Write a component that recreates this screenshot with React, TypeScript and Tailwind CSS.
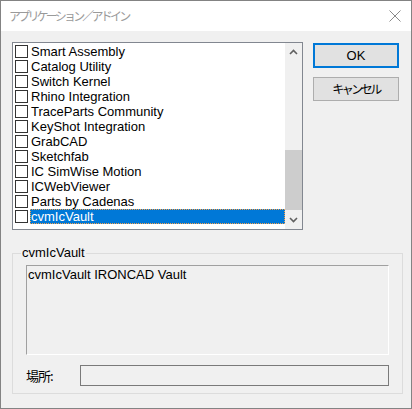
import React from "react";

const items = [
  "Smart Assembly",
  "Catalog Utility",
  "Switch Kernel",
  "Rhino Integration",
  "TraceParts Community",
  "KeyShot Integration",
  "GrabCAD",
  "Sketchfab",
  "IC SimWise Motion",
  "ICWebViewer",
  "Parts by Cadenas",
  "cvmIcVault",
];

const font = { fontFamily: '"Liberation Sans", "Noto Sans CJK JP", sans-serif' };
const jp = { fontFamily: '"Noto Sans CJK JP", sans-serif' };

export default function App() {
  return (
    <div
      className="w-[412px] h-[409px] border border-[#838383] bg-[#f0f0f0] flex flex-col text-[13px] text-black leading-none overflow-hidden"
      style={font}
    >
      {/* title bar */}
      <div className="h-[30px] bg-white flex items-center justify-between pl-[8px] pr-[8px] shrink-0">
        <span className="text-[#9a9a9a] text-[12px] tracking-[-2.8px]" style={jp}>
          アプリケーション／アドイン
        </span>
        <svg width="14" height="14" viewBox="0 0 14 14" className="mr-[1px]">
          <path d="M1.5 1.5 L12.5 12.5 M12.5 1.5 L1.5 12.5" stroke="#8a8a8a" strokeWidth="1" />
        </svg>
      </div>

      {/* body */}
      <div className="flex flex-col pt-[11px] pl-[11px] pr-[9px]">
        <div className="flex">
          {/* list box */}
          <div className="w-[291px] h-[188px] border border-[#828790] bg-white flex">
            <div className="flex-1 flex flex-col pt-[1px]">
              {items.map((it, i) => {
                const sel = i === items.length - 1;
                return (
                  <div key={it} className="h-[15px] flex items-center">
                    <div className="ml-[2px] w-[13px] h-[13px] border border-[#333333] bg-white shrink-0" />
                    <div
                      className={
                        "ml-[2px] h-[15px] flex items-center pl-[1px] " +
                        (sel
                          ? "flex-1 bg-[#0078d7] text-white outline-1 outline-dotted outline-[#f7a14a] -outline-offset-1"
                          : "")
                      }
                    >
                      {it}
                    </div>
                  </div>
                );
              })}
            </div>
            {/* scrollbar */}
            <div className="w-[17px] bg-[#f0f0f0] flex flex-col">
              <div className="h-[17px] flex items-center justify-center">
                <svg width="9" height="6" viewBox="0 0 9 6">
                  <path d="M1 5 L4.5 1.5 L8 5" stroke="#606060" strokeWidth="1.6" fill="none" />
                </svg>
              </div>
              <div className="h-[90px]" />
              <div className="h-[60px] bg-[#cdcdcd]" />
              <div className="flex-1 flex items-center justify-center">
                <svg width="9" height="6" viewBox="0 0 9 6">
                  <path d="M1 1 L4.5 4.5 L8 1" stroke="#606060" strokeWidth="1.6" fill="none" />
                </svg>
              </div>
            </div>
          </div>

          {/* buttons */}
          <div className="flex flex-col ml-[10px] mt-[1px] gap-[9px]">
            <button className="w-[86px] h-[25px] border-2 border-[#0078d7] bg-[#e1e1e1] flex items-center justify-center text-[13px]">
              OK
            </button>
            <button
              className="w-[86px] h-[24px] border border-[#adadad] bg-[#e1e1e1] flex items-center justify-center text-[12px] tracking-[-2.5px]"
              style={jp}
            >
              キャンセル
            </button>
          </div>
        </div>

        {/* group box */}
        <div className="relative mt-[23px] w-[391px] h-[141px] border border-[#dcdcdc] flex flex-col pl-[13px] pt-[11px]">
          <span className="absolute left-[8px] top-[-8px] bg-[#f0f0f0] px-[1px] text-[13px]">cvmIcVault</span>
          <div className="w-[363px] h-[90px] border-t border-l border-[#a0a0a0] border-b border-r border-b-white border-r-white pl-[1px] pt-[2px]">
            cvmIcVault IRONCAD Vault
          </div>
          <div className="flex items-center mt-[10px]">
            <span className="w-[54px] text-[13px] tracking-[-1px]" style={jp}>
              場所:
            </span>
            <div className="w-[309px] h-[21px] border border-[#7a7a7a] bg-[#f0f0f0]" />
          </div>
        </div>
      </div>
    </div>
  );
}
